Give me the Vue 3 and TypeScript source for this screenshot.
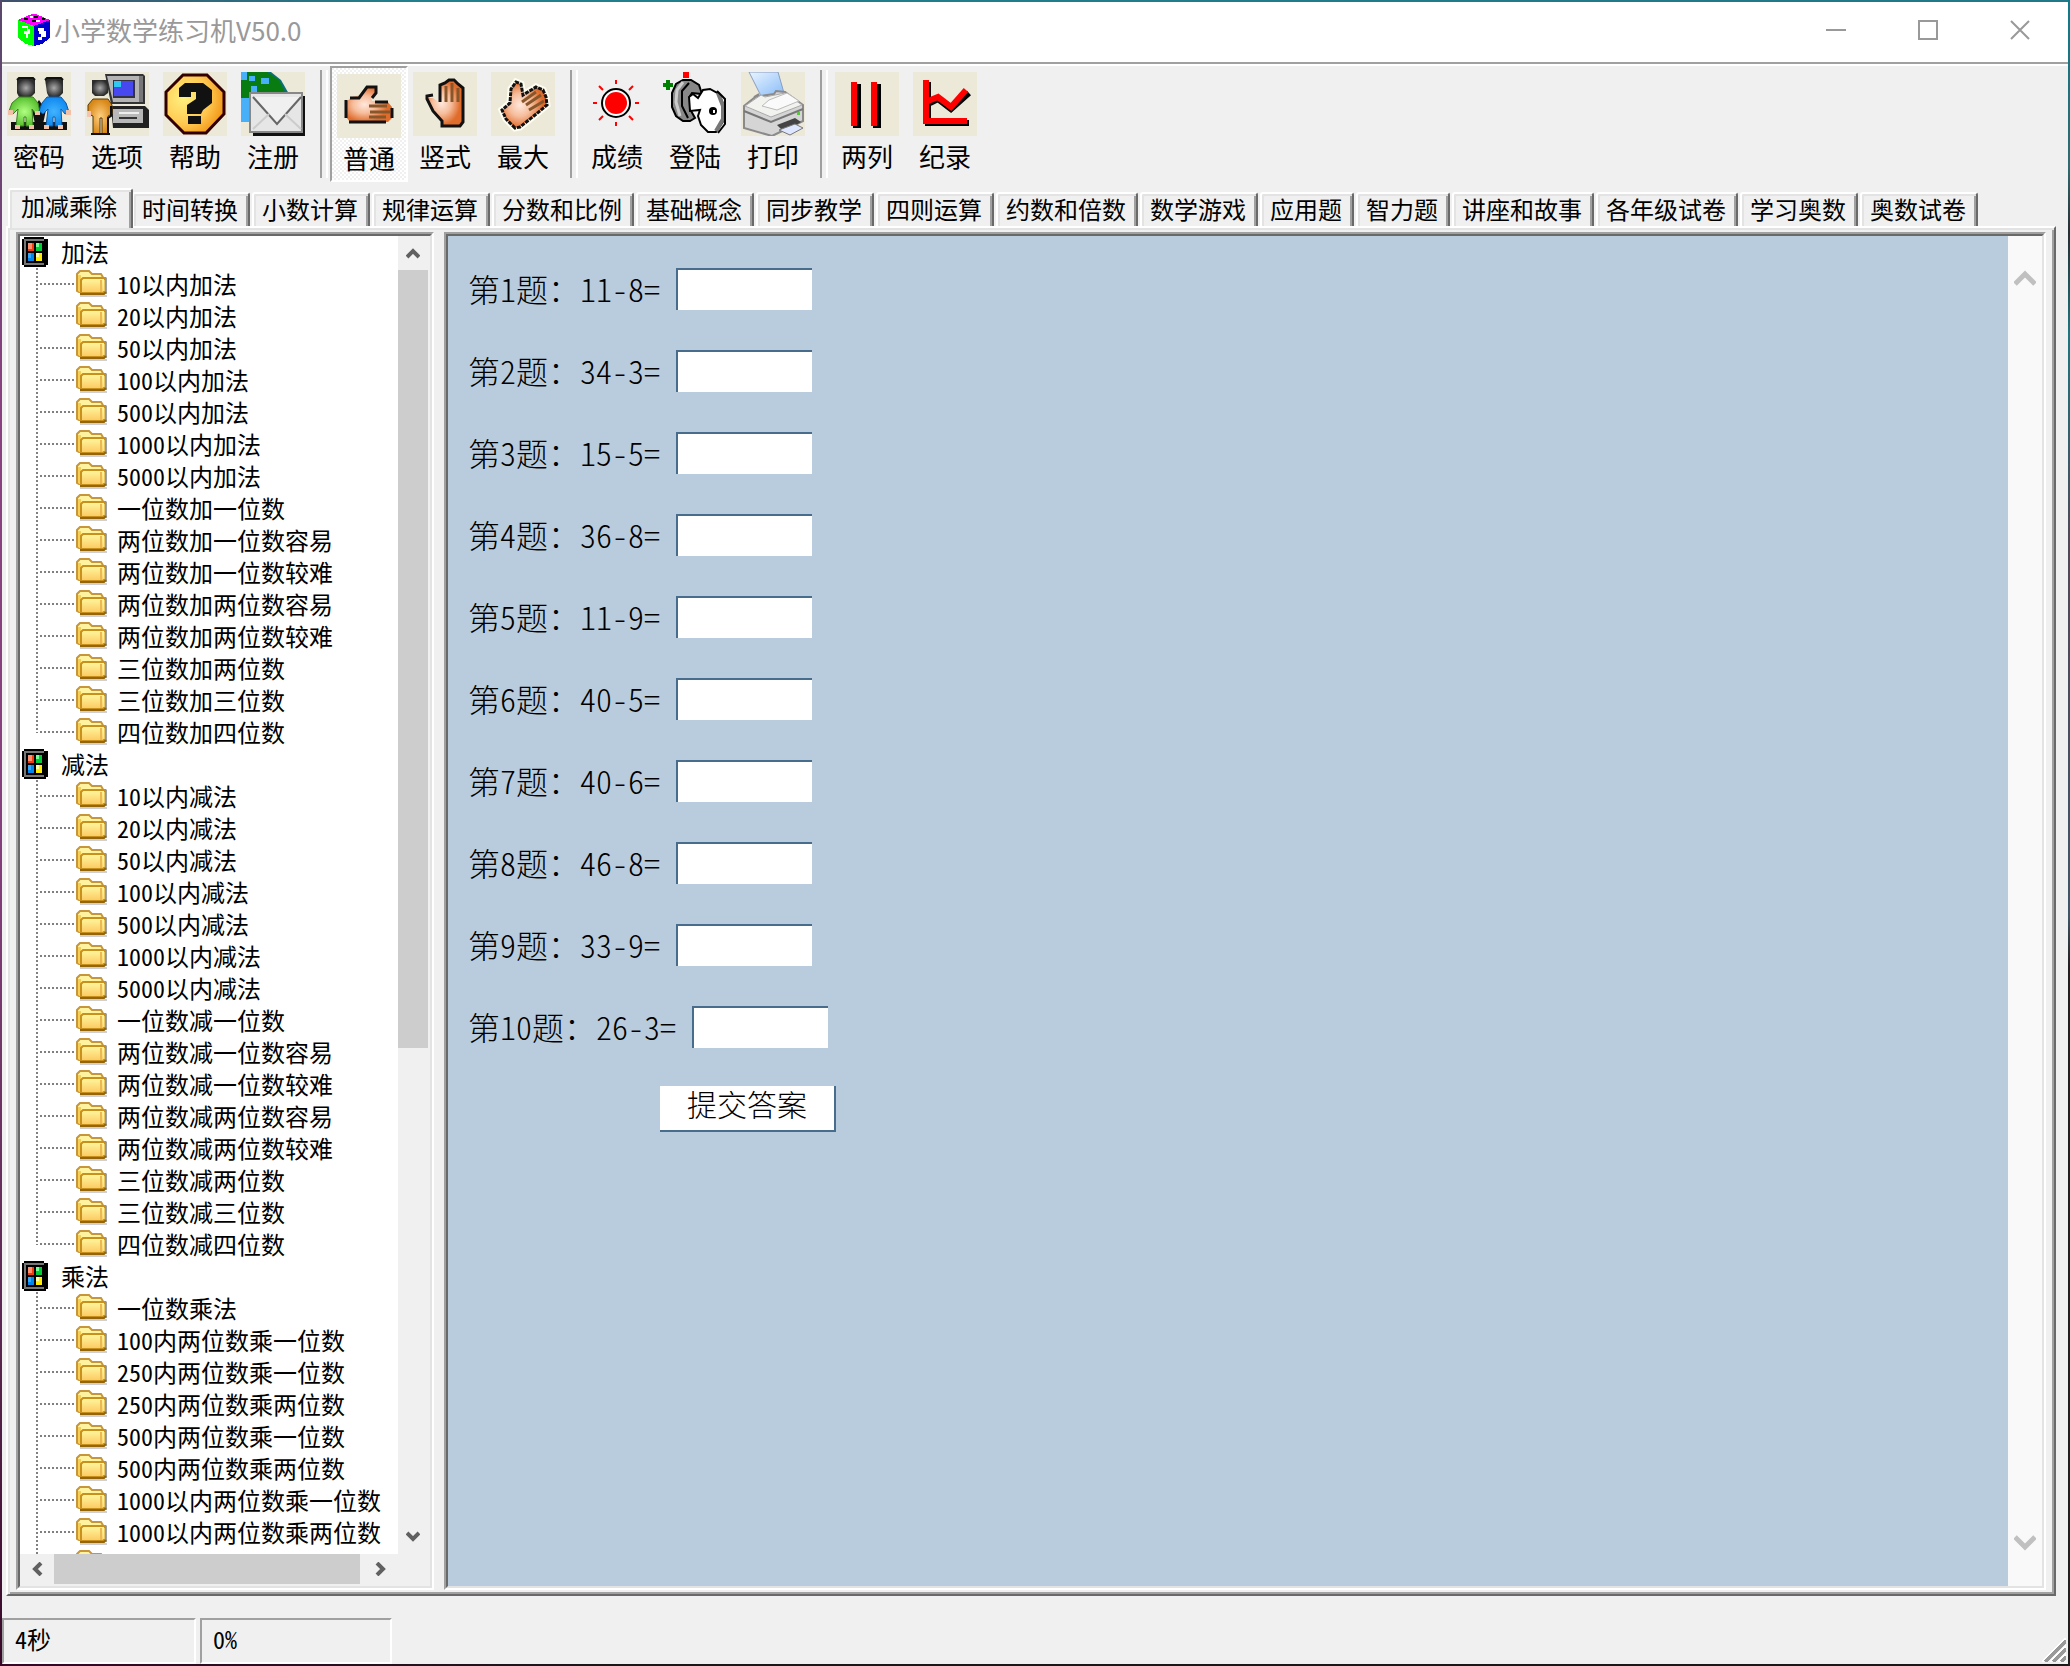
<script setup lang="ts">
import { ref } from 'vue'

interface TreeGroup {
  title: string
  items: string[]
}

interface Tool {
  icon: string
  label: string
}

const toolGroups: Tool[][] = [
  [
    { icon: 'people', label: '密码' },
    { icon: 'computer', label: '选项' },
    { icon: 'help', label: '帮助' },
    { icon: 'mail', label: '注册' },
  ],
  [
    { icon: 'point', label: '普通' },
    { icon: 'palm', label: '竖式' },
    { icon: 'tilted', label: '最大' },
  ],
  [
    { icon: 'sun', label: '成绩' },
    { icon: 'key', label: '登陆' },
    { icon: 'printer', label: '打印' },
  ],
  [
    { icon: 'columns', label: '两列' },
    { icon: 'chart', label: '纪录' },
  ],
]

const tabs: string[] = [
  '加减乘除', '时间转换', '小数计算', '规律运算', '分数和比例', '基础概念', '同步教学', '四则运算',
  '约数和倍数', '数学游戏', '应用题', '智力题', '讲座和故事', '各年级试卷', '学习奥数', '奥数试卷',
]

const tree: TreeGroup[] = [
  {
    title: '加法',
    items: [
      '10以内加法', '20以内加法', '50以内加法', '100以内加法', '500以内加法', '1000以内加法', '5000以内加法',
      '一位数加一位数', '两位数加一位数容易', '两位数加一位数较难', '两位数加两位数容易', '两位数加两位数较难',
      '三位数加两位数', '三位数加三位数', '四位数加四位数',
    ],
  },
  {
    title: '减法',
    items: [
      '10以内减法', '20以内减法', '50以内减法', '100以内减法', '500以内减法', '1000以内减法', '5000以内减法',
      '一位数减一位数', '两位数减一位数容易', '两位数减一位数较难', '两位数减两位数容易', '两位数减两位数较难',
      '三位数减两位数', '三位数减三位数', '四位数减四位数',
    ],
  },
  {
    title: '乘法',
    items: [
      '一位数乘法', '100内两位数乘一位数', '250内两位数乘一位数', '250内两位数乘两位数', '500内两位数乘一位数',
      '500内两位数乘两位数', '1000以内两位数乘一位数', '1000以内两位数乘两位数', '',
    ],
  },
]

const questions: string[] = ['11-8', '34-3', '15-5', '36-8', '11-9', '40-5', '40-6', '46-8', '33-9', '26-3']

const activeTab = ref(0)
const activeMode = ref('point')
const answers = ref<string[]>(questions.map(() => ''))

function pick(icon: string): void {
  if (['point', 'palm', 'tilted'].includes(icon)) activeMode.value = icon
}
</script>

<template>
  <div class="frame">
    <div class="window">
      <header class="titlebar">
        <svg class="logo" viewBox="0 0 32 32" shape-rendering="crispEdges">
          <path d="M0 6 14 0h4l14 6-16 6z" fill="#f0f" />
          <path d="M0 6l16 6v20L8 30 0 24z" fill="#0f0" />
          <path d="M32 6l-16 6v20l8-2 8-6z" fill="#00c" />
          <path d="M6 4h4v2H6zM16 2h4v2h-4zM14 6h4v2h-4zM24 4h3v2h-3z" fill="#000" />
          <path d="M12 2h3v2h-3zM18 6h4v2h-4z" fill="#fff" />
          <path d="M4 12h6v3h2v5h-2v4H8v-4H6v-3h3v-3H4zM20 14h6v3h2v6h-4v3h-4v-3h3v-3h-2v-3h-1z" fill="#fff" />
        </svg>
        <h1 class="title">小学数学练习机V50.0</h1>
        <button class="winbtn" aria-label="最小化">
          <svg viewBox="0 0 20 20"><path d="M0 10h20" /></svg>
        </button>
        <button class="winbtn" aria-label="最大化">
          <svg viewBox="0 0 20 20"><path d="M1 1h18v18H1z" /></svg>
        </button>
        <button class="winbtn" aria-label="关闭">
          <svg viewBox="0 0 20 20"><path d="M1 1l18 18M19 1L1 19" /></svg>
        </button>
      </header>

      <div class="toolbar">
        <template v-for="(group, g) in toolGroups" :key="g">
          <div v-if="g > 0" class="sep"></div>
          <button
            v-for="tool in group"
            :key="tool.icon"
            class="tool"
            :class="{ pressed: tool.icon === activeMode }"
            @click="pick(tool.icon)"
          >
            <svg v-if="tool.icon === 'people'" class="icon beige" viewBox="0 0 64 64">
              <path d="M4 50h56v8H4z" fill="#111" />
              <path d="M25 38l7-10 7 10-3 14h-8z" fill="#111" />
              <path d="M10 7h18v14l-4 4H12l-2-4z" fill="url(#gHead)" />
              <path d="M38 7h18v14l-4 4H42l-2-4z" fill="url(#gHead)" />
              <path d="M10 8l2-2h14l2 2M38 8l2-2h14l2 2" fill="none" stroke="#111" stroke-width="2" />
              <path d="M12 25h14l5 6 2 9-4 2-4-5 1 17h-7V45h-2v9H9l2-17-5 5-4-3 3-8z" fill="url(#gGreen)" stroke="#3a8020" />
              <path d="M40 25h14l5 6 3 9-4 2-4-5 1 17h-7V45h-2v9h-7l2-17-5 5-4-3 3-8z" fill="url(#gBlue)" stroke="#1458a0" />
              <path d="M1 38h5v5H1zM28 39h5v4h-5zM59 38h5v5h-5zM8 53h5v4H8zM22 53h5v4h-5zM37 53h5v4h-5zM51 53h5v4h-5z" fill="#f0c0a8" />
            </svg>
            <svg v-else-if="tool.icon === 'computer'" class="icon beige" viewBox="0 0 64 64">
              <path d="M26 34h34l4 4v18H28z" fill="#222" />
              <path d="M20 2h38l2 2v28H26z" fill="#333" />
              <path d="M22 4h32v26H28z" fill="#b4b4b4" />
              <path d="M54 4h4v26h-4z" fill="#777" />
              <path d="M28 8h22v18H28z" fill="#334" />
              <path d="M29 9h19v15H29z" fill="#4848f0" />
              <path d="M29 9h7v6h-7z" fill="#30c8f0" />
              <path d="M28 37h30v14H28z" fill="#b8b8b8" />
              <path d="M34 45h18v2H34z" fill="#333" />
              <path d="M34 40h20v2H34z" fill="#eee" />
              <path d="M7 8h16v13l-4 3h-9l-3-3z" fill="url(#gHead)" />
              <path d="M8 27h15l4 6v9l-4 2v18h-6V46h-2v16H8V44l-5-2v-9z" fill="url(#gOrange)" stroke="#5a3800" />
              <path d="M6 62h19M26 34v10l-3 2v16" fill="none" stroke="#111" stroke-width="2" />
              <path d="M2 39h4v6H2z" fill="#f4c4b0" />
            </svg>
            <svg v-else-if="tool.icon === 'help'" class="icon beige" viewBox="0 0 64 64">
              <path d="M20 3h24l17 17v22L43 61H21L3 43V20z" fill="url(#gHelp)" stroke="#300" stroke-width="3" />
              <path d="M16 25v-9l6-5h18l9 7v13l-9 7-2 4H24v-9l9-6v-7h-5v5z" fill="#111" />
              <path d="M25 44h13v8H25z" fill="#111" />
            </svg>
            <svg v-else-if="tool.icon === 'mail'" class="icon beige" viewBox="0 0 64 64">
              <path d="M0 0h30l10 8 8 14v28H0z" fill="#0a6f76" />
              <path d="M0 0h26l12 8 6 12H14l-4 12H0z" fill="#087c10" />
              <path d="M0 0h6v8H0zM8 4h6v5H8zM20 6h8v6h-8zM10 14h6v6h-6zM0 26h8v24H0z" fill="#48b0f8" />
              <path d="M12 24h52v40H12z" fill="#111" />
              <path d="M9 21h52v39H9z" fill="#e6e6e6" stroke="#888" stroke-width="2" />
              <path d="M12 25l24 27 24-27" fill="#f0f0f0" stroke="#666" stroke-width="2" />
              <path d="M12 57l16-15M60 57L44 42" stroke="#ccc" stroke-width="2" />
            </svg>
            <svg v-else-if="tool.icon === 'point'" class="icon beige" viewBox="0 0 64 64">
              <path d="M9 28l6-5 9-2 7-8h8v5l-5 5 1 4h15l5 6v11l-4 4H13l-4-5z" fill="url(#gSkin)" />
              <path d="M12 48h37M55 34v10M9 26v18M13 24h9l8-11h9v6l-4 5M38 28h13" fill="none" stroke="#111" stroke-width="3" />
              <path d="M32 32h18M33 38h20M32 43h17" stroke="#87562b" stroke-width="3" />
            </svg>
            <svg v-else-if="tool.icon === 'palm'" class="icon beige" viewBox="0 0 64 64">
              <path d="M29 53v-5l-8-8-7-11v-3h6l7 5V14l5-2 4-3h4l4 3 5 3 2 3v29l-4 6z" fill="url(#gSkin)" />
              <path d="M27 30V13l5-2 4-3h5l4 4 5 4v34l-3 4H29v-5l-9-10-6-12v-3l6-1" fill="none" stroke="#111" stroke-width="3" />
              <path d="M33 14v16M39 11v19M45 16v14" stroke="#87562b" stroke-width="3" />
            </svg>
            <svg v-else-if="tool.icon === 'tilted'" class="icon beige" viewBox="0 0 64 64">
              <path d="M24 56l-9-9-4-9 8-7 1-14 5-7 5 2 2 11 13-8 7 3 3 7 1 8-12 10-15 12z" fill="url(#gSkin)" stroke="#fffdf0" stroke-width="7" />
              <path d="M24 56l-9-9-4-9 8-7 1-14 5-7 5 2 2 11 13-8 7 3 3 7 1 8-12 10-15 12z" fill="url(#gSkin)" stroke="#111" stroke-width="3" stroke-dasharray="4 1" />
              <path d="M31 30l14-10M35 33l15-10M38 38l15-9" stroke="#87562b" stroke-width="3" />
            </svg>
            <svg v-else-if="tool.icon === 'sun'" class="icon" viewBox="0 0 64 64">
              <circle cx="31" cy="31" r="14" fill="#fff" stroke="#000" stroke-width="2" />
              <circle cx="31" cy="31" r="11" fill="red" />
              <path d="M31 8v4M31 50v4M8 31h4M50 31h4M14 14l4 4M48 14l-4 4M14 48l4-4M48 48l-4-4" stroke="red" stroke-width="2" />
            </svg>
            <svg v-else-if="tool.icon === 'key'" class="icon" viewBox="0 0 64 64">
              <path d="M20 0h6v6h-6z" fill="red" />
              <path d="M3 8h4v3h3v4H7v3H3v-3H0v-4h3z" fill="#008000" />
              <path d="M20 8h8l8 5 3 9-10-1-2 3v13l5 9-5 3h-7l-7-5-4-9V21l4-9z" fill="#888" stroke="#000" stroke-width="2" />
              <path d="M20 10l-6 8-1 12 4 14" fill="none" stroke="#ccc" stroke-width="3" />
              <path d="M26 11l-7 8v15l6 12" fill="none" stroke="#000" stroke-width="2" />
              <path d="M26 25l4-3 5 4 5-8 7-1 9 5 5 12v14l-8 12h-8l-7-7-3-9 2-6-10 1z" fill="#fff" stroke="#000" stroke-width="2" />
              <path d="M55 21l5 13v13l-7 12" fill="none" stroke="#777" stroke-width="4" />
              <path d="M54 19l8 8v25l-7 9" fill="none" stroke="#000" stroke-width="2" />
              <circle cx="50" cy="39" r="4" />
              <path d="M50 38h2v3h-2z" fill="#fff" />
            </svg>
            <svg v-else-if="tool.icon === 'printer'" class="icon beige" viewBox="0 0 64 64">
              <path d="M8 0h29l6 21-23 3z" fill="url(#gPaper)" stroke="#889cc0" />
              <path d="M18 22l-15 12v22l28 8 31-15V33l-18-13-9-1-2 3-20 3z" fill="#d5d5d5" stroke="#8a8a8a" stroke-width="2" />
              <path d="M20 23l-16 11 26 11 31-12-17-12-20 4z" fill="#f2f2ee" stroke="#aaa" />
              <path d="M28 28l18-7 12 8-22 9-15-4z" fill="#fafafa" stroke="#bbb" />
              <path d="M3 39l27 11 32-13" fill="none" stroke="#777" stroke-width="2" />
              <path d="M36 53l18-7 6 4-17 10z" fill="#444" />
              <path d="M38 58l16-6 8 4-13 7z" fill="#dfe6ff" stroke="#777" />
              <path d="M56 40h3v3h-3z" fill="#5c3" />
            </svg>
            <svg v-else-if="tool.icon === 'columns'" class="icon beige" viewBox="0 0 64 64">
              <path d="M18 12h8v44h-8zM38 12h8v44h-8z" />
              <path d="M16 10h6v44h-6zM36 10h6v44h-6z" fill="red" />
            </svg>
            <svg v-else class="icon beige" viewBox="0 0 64 64">
              <g fill="none" stroke-width="6">
                <path d="M15 10v41h41M17 31l8-4 13 10 18-16" stroke="#000" />
                <path d="M13 8v41h41M15 29l10-4 13 10 15-17" stroke="red" />
              </g>
            </svg>
            <span class="tool-label">{{ tool.label }}</span>
          </button>
        </template>
      </div>

      <div class="tabs" role="tablist">
        <button
          v-for="(tab, i) in tabs"
          :key="tab"
          class="tab"
          role="tab"
          :aria-selected="i === activeTab"
          :class="{ active: i === activeTab }"
          @click="activeTab = i"
        >
          {{ tab }}
        </button>
      </div>

      <div class="page">
        <aside class="sunken tree-pane">
          <div class="tree-row">
            <div class="tree">
              <section v-for="group in tree" :key="group.title">
                <h2 class="group">
                  <svg class="group-icon" viewBox="0 0 26 30" shape-rendering="crispEdges">
                    <path d="M2 0h20v2h4v26h-2v2H2v-2H0V2h2z" />
                    <path d="M2 2h20v26H2z" fill="#777" />
                    <path d="M4 4h18v22H4z" />
                    <path d="M6 6h6v8H6z" fill="#f53d10" />
                    <path d="M6 6h4v6H6z" fill="#ff9070" />
                    <path d="M14 6h6v8h-6z" fill="#0c3" />
                    <path d="M14 6h3v4h-3z" fill="#7f9" />
                    <path d="M6 16h6v8H6z" fill="#08e" />
                    <path d="M6 16h3v5H6z" fill="#3af" />
                    <path d="M14 16h6v8h-6z" fill="#fe0" />
                    <path d="M14 16h3v4h-3z" fill="#ffa" />
                  </svg>
                  {{ group.title }}
                </h2>
                <ul class="items">
                  <li v-for="(item, i) in group.items" :key="i" class="item">
                    <svg class="folder" viewBox="0 0 32 28">
                      <path d="M5 24h26V8l-1-1v16z" fill="#888" opacity=".8" />
                      <path d="M4 25h27v2H4z" fill="#d0d0d0" />
                      <path d="M1 21V4l3-3h9l3 3h9l3 5v13H3z" fill="#fff3a0" stroke="#c8963a" stroke-width="2" />
                      <path d="M2 21V5h3v18z" fill="#f6cf58" />
                      <path d="M5 10l2-2h22v13l-2 2H5z" fill="url(#gFolder)" stroke="#c8901c" stroke-width="2" />
                      <path d="M25 10v12" stroke="#eeb850" stroke-width="2" />
                      <path d="M28 10v11" stroke="#fff8a0" stroke-width="1" />
                      <path d="M4 24h24l2-2" fill="none" stroke="#94660c" stroke-width="2" />
                    </svg>
                    {{ item }}
                  </li>
                </ul>
              </section>
            </div>
            <div class="vscroll">
              <button aria-label="向上滚动"><svg viewBox="0 0 14 12"><path d="M1 10l6-6 6 6" /></svg></button>
              <div class="thumb"></div>
              <button aria-label="向下滚动"><svg viewBox="0 0 14 12"><path d="M1 2l6 6 6-6" /></svg></button>
            </div>
          </div>
          <div class="hscroll">
            <button aria-label="向左滚动"><svg viewBox="0 0 12 14"><path d="M10 1L4 7l6 6" /></svg></button>
            <div class="thumb"></div>
            <button aria-label="向右滚动"><svg viewBox="0 0 12 14"><path d="M2 1l6 6-6 6" /></svg></button>
          </div>
        </aside>

        <main class="sunken quiz">
          <form class="questions" @submit.prevent>
            <div v-for="(q, i) in questions" :key="i" class="question">
              <label :for="`answer-${i}`">第{{ i + 1 }}题：{{ q }}=</label>
              <input :id="`answer-${i}`" v-model="answers[i]" type="text" autocomplete="off" />
            </div>
            <button class="submit" type="submit">提交答案</button>
          </form>
          <div class="page-scroll">
            <button aria-label="上一页"><svg viewBox="0 0 22 18"><path d="M1 14L11 4l10 10" /></svg></button>
            <button aria-label="下一页"><svg viewBox="0 0 22 18"><path d="M1 3l10 10L21 3" /></svg></button>
          </div>
        </main>
      </div>

      <footer class="status">
        <div class="cell">4秒</div>
        <div class="cell">0%</div>
        <svg class="grip" viewBox="0 0 24 24" shape-rendering="crispEdges">
          <path d="M0 24L24 0M8 24L24 8M16 24l8-8" stroke="#fff" stroke-width="2" />
          <path d="M3 24L24 3M11 24l13-13M19 24l5-5" stroke="#999" stroke-width="3" />
        </svg>
      </footer>
    </div>

    <svg class="defs" aria-hidden="true">
      <defs>
        <radialGradient id="gHead"><stop offset="0" stop-color="#aaa" /><stop offset="1" stop-color="#2c2c2c" /></radialGradient>
        <radialGradient id="gGreen"><stop offset="0" stop-color="#b0ff80" /><stop offset="1" stop-color="#58c030" /></radialGradient>
        <radialGradient id="gBlue"><stop offset="0" stop-color="#40b4ff" /><stop offset="1" stop-color="#1088f0" /></radialGradient>
        <radialGradient id="gOrange"><stop offset="0" stop-color="#ffd080" /><stop offset="1" stop-color="#d88818" /></radialGradient>
        <radialGradient id="gHelp" cx=".3" cy=".4" r=".75"><stop offset="0" stop-color="#fff080" /><stop offset=".6" stop-color="#ffc850" /><stop offset="1" stop-color="#f09010" /></radialGradient>
        <radialGradient id="gSkin" cx=".4"><stop offset="0" stop-color="#ffe8dc" /><stop offset=".5" stop-color="#f6bd9c" /><stop offset="1" stop-color="#e06c2c" /></radialGradient>
        <linearGradient id="gPaper" x1="0" y1="0" x2="1" y2="1"><stop offset="0" stop-color="#eaf4ff" /><stop offset="1" stop-color="#88bcf8" /></linearGradient>
        <linearGradient id="gFolder" x1="0" y1="0" x2="0" y2="1"><stop offset="0" stop-color="#fff8a0" /><stop offset="1" stop-color="#fcc860" /></linearGradient>
      </defs>
    </svg>
  </div>
</template>

<style>
body {
  margin: 0;
}
</style>

<style scoped>
* {
  box-sizing: border-box;
}
.frame {
  height: 100vh;
  padding: 2px;
  overflow: hidden;
  font-family: 'Noto Sans CJK SC', 'Noto Sans', sans-serif;
  font-size: 24px;
  color: #000;
  background:
    linear-gradient(#58486c, #8a4080 25%, #84407c 50%, #5a2850 80%, #380828) left / 2px 100% no-repeat,
    linear-gradient(#0c7c8c, #2c6c70 10%, #243034 14%, #187880 20%, #504858 33%, #3c5868 55%, #202020 58%) right / 2px 100% no-repeat,
    linear-gradient(90deg, #40506c, #20808c 20%, #207888) top / 100% 2px no-repeat,
    linear-gradient(90deg, #380828, #181818 30%) bottom / 100% 2px no-repeat;
}
.defs {
  position: absolute;
  width: 0;
  height: 0;
}
button,
input {
  font: inherit;
  color: inherit;
  border: 0;
  padding: 0;
  margin: 0;
  background: none;
}
.window {
  height: 100%;
  display: flex;
  flex-direction: column;
  background: #f0f0f0;
}
.titlebar {
  flex: none;
  height: 62px;
  display: flex;
  align-items: center;
  padding: 0 2px 4px 16px;
  background: #fff;
  border-bottom: 2px solid #a0a0a0;
}
.logo {
  width: 32px;
  height: 32px;
}
.title {
  flex: 1;
  margin: 0 0 0 4px;
  font-size: 26px;
  line-height: 32px;
  font-weight: 400;
  color: #999;
}
.winbtn {
  width: 92px;
  height: 56px;
}
.winbtn svg {
  display: block;
  width: 20px;
  height: 20px;
  margin: 0 auto;
  fill: none;
  stroke: #999;
  stroke-width: 2;
}
.toolbar {
  flex: none;
  display: flex;
  height: 118px;
  border-top: 2px solid #fff;
}
.tool {
  display: flex;
  flex-direction: column;
  align-items: center;
  justify-content: flex-start;
  width: 78px;
  height: 116px;
  padding: 4px 6px 0 2px;
  border: 2px solid transparent;
}
.tool.pressed {
  padding: 6px 4px 0 4px;
  border-color: #a0a0a0 #fff #fff #a0a0a0;
  background: repeating-conic-gradient(#fff 0 25%, #f0f0f0 0 50%) 0 0 / 4px 4px;
}
.icon {
  flex: none;
  width: 64px;
  height: 64px;
}
.beige {
  background: #ece9d8;
}
.tool-label {
  margin-top: 4px;
  font-size: 26px;
  line-height: 32px;
  white-space: nowrap;
}
.sep {
  width: 16px;
  padding-left: 6px;
}
.sep::before {
  content: '';
  display: block;
  width: 4px;
  height: 108px;
  margin-top: 4px;
  border-left: 2px solid #a0a0a0;
  border-right: 2px solid #fff;
}
.tabs {
  flex: none;
  display: flex;
  align-items: flex-end;
  height: 44px;
  padding-left: 8px;
}
.tab {
  height: 34px;
  margin-left: 2px;
  padding: 0 10px 2px 8px;
  line-height: 30px;
  white-space: nowrap;
  border-top: 2px solid #fff;
  border-left: 2px solid #fff;
  border-right: 2px solid #696969;
  border-radius: 3px 3px 0 0;
  box-shadow: inset 2px 2px #e3e3e3, inset -2px 0 #a0a0a0;
}
.tab.active {
  position: relative;
  height: 40px;
  padding: 0 14px 6px 11px;
  margin: 0 -3px -2px -2px;
  background: #f0f0f0;
}
.page {
  flex: 1;
  min-height: 0;
  display: flex;
  gap: 10px;
  margin: 0 12px 0 4px;
  padding: 4px 8px;
  border: 2px solid;
  border-color: #fff #696969 #696969 #fff;
  box-shadow: inset 2px 2px #e3e3e3, inset -2px -2px #a0a0a0;
}
.sunken {
  border: 2px solid;
  border-color: #a0a0a0 #fff #fff #a0a0a0;
  position: relative;
}
.sunken::before {
  content: '';
  position: absolute;
  inset: 0;
  border: 2px solid;
  border-color: #696969 #e3e3e3 #e3e3e3 #696969;
  pointer-events: none;
}
.tree-pane {
  flex: none;
  width: 418px;
  padding: 2px;
  display: flex;
  flex-direction: column;
}
.tree-row {
  flex: 1;
  min-height: 0;
  display: flex;
}
.tree {
  flex: 1;
  overflow: hidden;
  background: #fff;
}
.group {
  display: flex;
  align-items: center;
  gap: 13px;
  height: 32px;
  margin: 0;
  padding-left: 2px;
  font-size: 24px;
  line-height: 30px;
  font-weight: 400;
}
.group-icon {
  width: 26px;
  height: 30px;
}
.items {
  margin: 0;
  padding: 0;
  list-style: none;
}
.item {
  display: flex;
  align-items: center;
  gap: 9px;
  height: 32px;
  margin-left: 16px;
  padding-left: 40px;
  line-height: 30px;
  white-space: nowrap;
  font-feature-settings: 'hwid' 1;
  background:
    repeating-linear-gradient(#808080 0 2px, transparent 2px 4px) 0 0 / 2px 100% no-repeat,
    repeating-linear-gradient(90deg, #808080 0 2px, transparent 2px 4px) 4px 15px / 34px 2px no-repeat;
}
.item:last-child {
  background:
    repeating-linear-gradient(#808080 0 2px, transparent 2px 4px) 0 0 / 2px 17px no-repeat,
    repeating-linear-gradient(90deg, #808080 0 2px, transparent 2px 4px) 4px 15px / 34px 2px no-repeat;
}
.folder {
  flex: none;
  width: 32px;
  height: 28px;
}
.vscroll {
  width: 32px;
  padding-right: 2px;
  display: flex;
  flex-direction: column;
}
.vscroll button {
  height: 34px;
  width: 30px;
}
.vscroll .thumb {
  height: 59%;
  margin-bottom: auto;
}
.vscroll svg,
.hscroll svg {
  display: block;
  margin: 0 auto;
  fill: none;
  stroke: #606060;
  stroke-width: 4;
}
.vscroll svg {
  width: 14px;
  height: 12px;
}
.hscroll svg {
  width: 12px;
  height: 14px;
}
.thumb {
  background: #cdcdcd;
}
.hscroll {
  flex: none;
  height: 32px;
  display: flex;
  padding: 0 32px 2px 0;
}
.hscroll button {
  width: 34px;
}
.hscroll .thumb {
  flex: 1;
  margin-right: 4px;
}
.quiz {
  flex: 1;
  min-width: 0;
  padding: 2px;
  display: flex;
  background: #b8ccde;
}
.questions {
  flex: 1;
  display: flex;
  flex-direction: column;
  align-items: flex-start;
  gap: 40px;
  padding: 32px 20px;
  font-size: 32px;
  font-weight: 300;
  font-feature-settings: 'hwid' 1;
}
.question {
  display: flex;
  align-items: center;
  gap: 16px;
  height: 42px;
  line-height: 40px;
  white-space: nowrap;
}
.question label {
  height: 42px;
}
.question input {
  width: 136px;
  height: 42px;
  padding: 0 4px;
  background: #fff;
  border-top: 2px solid #486c8c;
  border-left: 2px solid #486c8c;
  outline: 0;
}
.submit {
  width: 176px;
  height: 46px;
  margin: -2px 0 0 192px;
  padding-bottom: 10px;
  font-size: 30px;
  line-height: 34px;
  font-weight: 300;
  background: #fff;
  border-right: 2px solid #486c8c;
  border-bottom: 2px solid #486c8c;
}
.page-scroll {
  width: 34px;
  display: flex;
  flex-direction: column;
  justify-content: space-between;
  padding: 34px 0;
  background: #f9f9f9;
}
.page-scroll svg {
  display: block;
  width: 22px;
  height: 18px;
  margin: 0 auto;
  fill: none;
  stroke: #c0c0c0;
  stroke-width: 5;
}
.status {
  flex: none;
  display: flex;
  gap: 4px;
  height: 68px;
  padding-top: 22px;
}
.cell {
  width: 192px;
  padding-left: 11px;
  line-height: 38px;
  border: 2px solid;
  border-color: #a0a0a0 #fff #fff #a0a0a0;
  font-feature-settings: 'hwid' 1;
}
.cell:first-child {
  width: 194px;
}
.grip {
  width: 24px;
  height: 24px;
  margin: auto 2px 2px auto;
}
</style>
